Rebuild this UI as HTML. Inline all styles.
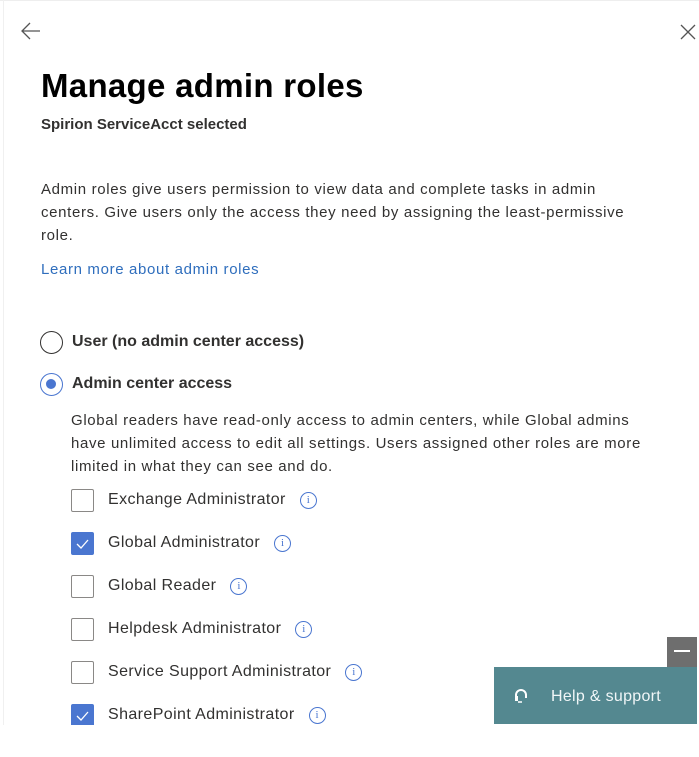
<html><head><style>
body{margin:0;width:699px;height:757px;background:#fff;font-family:"Liberation Sans",sans-serif;color:#323130;position:relative;overflow:hidden}
.a{position:absolute;white-space:nowrap}
.cb{position:absolute;left:71px;width:23px;height:23px;border:1px solid #8a8886;border-radius:2px;box-sizing:border-box}
.cb.on{background:#4a76d0;border-color:#4a76d0}
.lbl{position:absolute;left:108px;font-size:16px;color:#323130;letter-spacing:0.4px}
.i{display:inline-block;width:15px;height:15px;border:1.3px solid #4a76d0;border-radius:50%;color:#4a76d0;font-size:11px;text-align:center;line-height:15px;margin-left:14px;vertical-align:1px;font-family:"Liberation Serif",serif;letter-spacing:0}
.p{font-size:15px;line-height:23px;letter-spacing:0.65px}
</style></head><body>
<div style="position:absolute;left:0;top:0;width:699px;height:1px;background:#eee"></div>
<div style="position:absolute;left:3px;top:0;width:1px;height:725px;background:#f0f0f0"></div>
<svg class="a" style="left:20px;top:21px" width="22" height="20"><path d="M20 10H2M10 2L2 10L10 18" stroke="#555" stroke-width="1.3" fill="none"/></svg>
<svg class="a" style="left:680px;top:24px" width="16" height="16"><path d="M1 1L15 15M15 1L1 15" stroke="#555" stroke-width="1.3"/></svg>
<div class="a" style="left:41px;top:67px;font-size:33px;font-weight:bold;color:#000;letter-spacing:0.3px">Manage admin roles</div>
<div class="a" style="left:41px;top:116px;font-size:15px;font-weight:bold;color:#323130">Spirion ServiceAcct selected</div>
<div class="a p" style="left:41px;top:178px">Admin roles give users permission to view data and complete tasks in admin<br>centers. Give users only the access they need by assigning the least-permissive<br>role.</div>
<div class="a p" style="left:41px;top:258px;color:#2f6ebd">Learn more about admin roles</div>
<div class="a" style="left:40px;top:331px;width:23px;height:23px;border:1.3px solid #323130;border-radius:50%;box-sizing:border-box"></div>
<div class="a" style="left:72px;top:333px;font-size:16px;font-weight:bold;color:#323130">User (no admin center access)</div>
<div class="a" style="left:40px;top:373px;width:23px;height:23px;border:1.3px solid #4a76d0;border-radius:50%;box-sizing:border-box"><div style="position:absolute;left:5px;top:5px;width:10px;height:10px;border-radius:50%;background:#4a76d0"></div></div>
<div class="a" style="left:72px;top:375px;font-size:16px;font-weight:bold;color:#323130">Admin center access</div>
<div class="a p" style="left:71px;top:409px">Global readers have read-only access to admin centers, while Global admins<br>have unlimited access to edit all settings. Users assigned other roles are more<br>limited in what they can see and do.</div>
<div class="cb" style="top:489px"></div><div class="lbl" style="top:491px">Exchange Administrator<span class="i">i</span></div>
<div class="cb on" style="top:532px"><svg width="23" height="23" style="position:absolute;left:-1px;top:-1px"><path d="M6 12L10 16L17 8" stroke="#fff" stroke-width="1.3" fill="none"/></svg></div><div class="lbl" style="top:534px">Global Administrator<span class="i">i</span></div>
<div class="cb" style="top:575px"></div><div class="lbl" style="top:577px">Global Reader<span class="i">i</span></div>
<div class="cb" style="top:618px"></div><div class="lbl" style="top:620px">Helpdesk Administrator<span class="i">i</span></div>
<div class="cb" style="top:661px"></div><div class="lbl" style="top:663px">Service Support Administrator<span class="i">i</span></div>
<div class="cb on" style="top:704px"><svg width="23" height="23" style="position:absolute;left:-1px;top:-1px"><path d="M6 12L10 16L17 8" stroke="#fff" stroke-width="1.3" fill="none"/></svg></div><div class="lbl" style="top:706px">SharePoint Administrator<span class="i">i</span></div>
<div style="position:absolute;left:0;top:725px;width:699px;height:32px;background:#fff"></div>
<div style="position:absolute;left:667px;top:637px;width:30px;height:30px;background:#6e6e6e"><div style="position:absolute;left:7px;top:13px;width:16px;height:2px;background:#fff"></div></div>
<div style="position:absolute;left:494px;top:667px;width:203px;height:57px;background:#548890;color:#f0f6f7;font-size:16px;letter-spacing:0.3px">
<svg style="position:absolute;left:20px;top:21px" width="14" height="16"><path d="M2 10V7a5 5 0 0 1 10 0v3" stroke="#fff" stroke-width="2" fill="none"/><rect x="1" y="8" width="3" height="5" fill="#fff"/><path d="M4 14h4" stroke="#fff" stroke-width="1.5"/></svg>
<div style="position:absolute;left:57px;top:21px">Help &amp; support</div></div>
</body></html>
